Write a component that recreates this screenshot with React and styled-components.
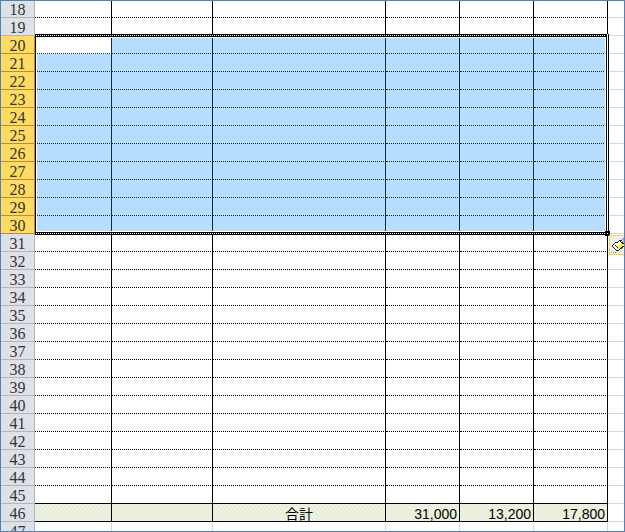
import React from "react";
import styled, { createGlobalStyle, css } from "styled-components";

const FIRST_ROW = 18;
const LAST_ROW = 47;
const TOTAL_ROW = 46;
const SELECTION = { from: 20, to: 30 };

const rows = Array.from(
  { length: LAST_ROW - FIRST_ROW + 1 },
  (_, i) => FIRST_ROW + i
);
const totals = ["", "", "合計", "31,000", "13,200", "17,800"];

const isSelected = (row) => row >= SELECTION.from && row <= SELECTION.to;

function lineKind(row) {
  if (row > TOTAL_ROW) return "none";
  return row >= TOTAL_ROW - 1 ? "solid" : "dotted";
}

export default function App() {
  return (
    <>
      <GlobalStyle />
      <Sheet>
        <Grid>
          <colgroup>
            <Col $width={34} />
            <Col $width={77} />
            <Col $width={101} />
            <Col />
            <Col $width={74} />
            <Col $width={74} />
            <Col $width={74} />
            <Col $width={16} />
          </colgroup>
          <tbody>
            {rows.map((row) => (
              <tr key={row}>
                <RowHeader scope="row" $selected={isSelected(row)}>
                  {row}
                </RowHeader>
                {totals.map((value, i) => (
                  <Cell
                    key={i}
                    $line={lineKind(row)}
                    $selected={isSelected(row)}
                    $active={row === SELECTION.from && i === 0}
                    $total={row === TOTAL_ROW}
                    $align={i === 2 ? "center" : "right"}
                  >
                    {row === TOTAL_ROW ? value : ""}
                  </Cell>
                ))}
                <EmptyCell />
              </tr>
            ))}
          </tbody>
        </Grid>
        <Selection>
          <Ants $side="top" />
          <Ants $side="bottom" />
          <Ants $side="right" />
          <FillHandle />
          <PasteOptions type="button" aria-label="貼り付けのオプション">
            <PasteIcon />
          </PasteOptions>
        </Selection>
      </Sheet>
    </>
  );
}

function PasteIcon() {
  return (
    <svg
      width="20"
      height="16"
      viewBox="0 0 20 16"
      shapeRendering="crispEdges"
      aria-hidden="true"
    >
      <path d="M1 9l4-4h2l2-2 2 1 3-2 3 3-9 8H5z" fill="#fff" />
      <path d="M5 11l5-5 3 1-5 5H6z" fill="#ffee00" />
      <path d="M10 5l3-3 5 2-4 4z" fill="#a9b6d8" />
      <path
        d="M1 9l4-4h2l2-2 2 1M1 9l4 4h3l6-5M9 4l5 4M4 8l3 3"
        fill="none"
        stroke="#222"
      />
      <path d="M11 3l2-2 3 2" fill="none" stroke="#44598f" />
      <path d="M0 15h1M2 15h1M4 15h1" stroke="#999" />
    </svg>
  );
}

const GlobalStyle = createGlobalStyle`
  * {
    box-sizing: border-box;
  }

  body {
    margin: 0;
    background-color: #fff;
  }
`;

const Sheet = styled.main`
  position: relative;
  height: 100vh;
  overflow: hidden;
  border: 1px solid #4f81bd;
`;

const Grid = styled.table`
  width: 100%;
  table-layout: fixed;
  border-collapse: separate;
  border-spacing: 0;

  tr {
    height: 18px;
  }

  /* the top row is scrolled a little out of view */
  tr:first-child {
    height: 17px;
  }

  tr:first-child > * {
    height: 17px;
    padding-top: 2px;
  }
`;

const Col = styled.col`
  width: ${({ $width }) => ($width ? `${$width}px` : "auto")};
`;

/* fine speckle laid over a flat fill */
const speckle = (color) => css`
  background-image: radial-gradient(${color} 1px, transparent 1px),
    radial-gradient(${color} 1px, transparent 1px);
  background-position: 0 0, 2px 3px;
  background-size: 4px 5px;
`;

const RowHeader = styled.th`
  height: 18px;
  padding: 3px 0 0;
  border-right: 1px solid #b1b5ba;
  border-bottom: 1px solid #b1b5ba;
  background-color: #dfe3e8;
  color: #333;
  font: 400 16px/14px "Liberation Serif", serif;
  text-align: center;
  vertical-align: top;

  ${({ $selected }) =>
    $selected
      ? css`
          border-color: #c28a30;
          background-color: #ffdc61;
        `
      : speckle("#dce1e8")}
`;

const Cell = styled.td`
  height: 18px;
  padding: 3px 2px 0;
  overflow: hidden;
  border-right: 1px solid #000;
  border-bottom: 1px dotted #000;
  color: #000;
  font: 14px/14px "Liberation Sans", "Noto Sans CJK JP", sans-serif;
  text-align: ${({ $align }) => $align};
  vertical-align: top;
  white-space: nowrap;

  ${({ $line }) =>
    $line === "solid" &&
    css`
      border-bottom-style: solid;
    `}

  ${({ $line }) =>
    $line === "none" &&
    css`
      border-color: #d8d8d8;
    `}

  ${({ $selected }) =>
    $selected &&
    css`
      border-color: #0a2f52;
      background-color: #b7ddff;
    `}

  ${({ $active }) =>
    $active &&
    css`
      background-color: #fff;
    `}

  ${({ $total }) =>
    $total &&
    css`
      background-color: #eff4df;
      ${speckle("#e8eedd")}
    `}
`;

const EmptyCell = styled.td`
  height: 18px;
  padding: 0;
  border-bottom: 1px solid #d8d8d8;
`;

/* outline of the copied range, drawn over the cell borders */
const Selection = styled.div`
  position: absolute;
  top: 33px;
  left: 34px;
  right: 15px;
  height: 201px;
  border-left: 1px solid #000;
  box-shadow: inset 1px 4px #fff, inset -4px -4px #fff;
`;

const Ants = styled.div`
  position: absolute;

  ${({ $side }) =>
    $side === "right"
      ? css`
          top: 0;
          bottom: 0;
          right: 0;
          width: 3px;
          border: solid #000;
          border-width: 0 1px;
          background-color: #fff;
        `
      : css`
          ${$side}: 0;
          left: 0;
          right: 0;
          height: 3px;
          border: solid #000;
          border-width: 1px 0;
          background: repeating-linear-gradient(
            to right,
            #fff 0 1px,
            #000 1px 2px
          );
        `}
`;

const FillHandle = styled.span`
  position: absolute;
  right: -1px;
  bottom: -1px;
  width: 5px;
  height: 5px;
  border: 2px solid #000;
  background-color: #fff;
`;

const PasteOptions = styled.button`
  position: absolute;
  top: 201px;
  left: 100%;
  display: flex;
  align-items: center;
  width: 32px;
  height: 20px;
  padding: 0 1px;
  border: 1px solid #ffd452;
  background-color: #efefef;
`;
